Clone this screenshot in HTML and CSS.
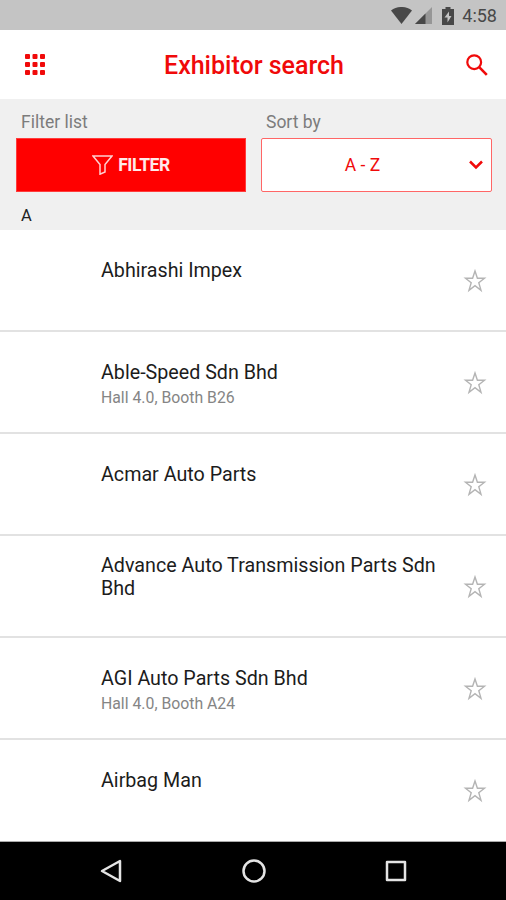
FILE: index.html
```html
<!DOCTYPE html>
<html lang="en">
<head>
    <meta charset="UTF-8">
    <meta name="viewport" content="width=device-width, initial-scale=1.0">
    <title>Exhibitor search</title>
    <link rel="stylesheet" href="styles.css">
</head>
<body>
    <svg class="sprite">
        <symbol id="star" viewBox="0 0 24 24">
            <path d="M12 2l2.400 7.300h7.100l-5.700 4.500 2.200 7.500-6-4.600-6 4.600 2.200-7.500-5.700-4.500h7.100z" fill="none" stroke="#b4b4b4" stroke-width="1.4"/>
        </symbol>
    </svg>

    <div class="screen">
        <!-- status bar -->
        <div class="status-bar">
            <svg class="wifi" width="21" height="17" viewBox="0 0 21 17"><path d="M0 3.500C6-1.200 15-1.200 21 3.500L10.500 17z" fill="#484848"/></svg>
            <svg class="signal" width="17" height="17" viewBox="0 0 17 17"><path d="M17 0v17H0z" fill="#969696"/><path d="M10.500 6.500V17H0z" fill="#484848"/></svg>
            <svg class="battery" width="12" height="18" viewBox="0 0 12 18"><path d="M3.500 0h5v2H12v16H0V2h3.500z" fill="#484848"/><path d="M7 4.500L2.500 10.500H5.500V15.500L9.500 9H7z" fill="#c4c4c4"/></svg>
            <span class="clock">4:58</span>
        </div>

        <!-- header -->
        <div class="header">
            <svg class="menu-icon" width="20" height="21" viewBox="0 0 20 21" fill="#f00a0a">
                <rect x="0" y="0" width="5" height="5" rx="1"/><rect x="7.500" y="0" width="5" height="5" rx="1"/><rect x="15" y="0" width="5" height="5" rx="1"/>
                <rect x="0" y="8" width="5" height="5" rx="1"/><rect x="7.500" y="8" width="5" height="5" rx="1"/><rect x="15" y="8" width="5" height="5" rx="1"/>
                <rect x="0" y="16" width="5" height="5" rx="1"/><rect x="7.500" y="16" width="5" height="5" rx="1"/><rect x="15" y="16" width="5" height="5" rx="1"/>
            </svg>
            <h1>Exhibitor search</h1>
            <svg class="search-icon" width="22" height="22" viewBox="0 0 22 22" fill="none" stroke="#f00a0a">
                <circle cx="8.200" cy="8.200" r="6.900" stroke-width="2.200"/>
                <path d="M13.200 13.200l7.600 7.600" stroke-width="2.600"/>
            </svg>
        </div>

        <!-- filter and sort -->
        <div class="toolbar">
            <div class="field">
                <label>Filter list</label>
                <button class="filter">
                    <svg width="21" height="20" viewBox="0 0 21 20" fill="none" stroke="#ffd0d0" stroke-width="1.500"><path d="M1 1h19l-7 8.500v7.500l-5 2.200V9.500z"/></svg>
                    FILTER
                </button>
            </div>
            <div class="field">
                <label>Sort by</label>
                <button class="sort">
                    <span>A - Z</span>
                    <svg width="14" height="10" viewBox="0 0 14 10" fill="none" stroke="#f00a0a" stroke-width="2.500"><path d="M1 1.500l6 6 6-6"/></svg>
                </button>
            </div>
            <div class="letter">A</div>
        </div>

        <!-- exhibitors -->
        <div class="list">
            <div class="item">
                <div class="info">
                    <div class="name"><span>Abhirashi Impex</span></div>
                </div>
                <svg class="star"><use href="#star"/></svg>
            </div>
            <div class="item">
                <div class="info">
                    <div class="name"><span>Able-Speed Sdn Bhd</span></div>
                    <div class="place">Hall 4.0, Booth B26</div>
                </div>
                <svg class="star"><use href="#star"/></svg>
            </div>
            <div class="item">
                <div class="info">
                    <div class="name"><span>Acmar Auto Parts</span></div>
                </div>
                <svg class="star"><use href="#star"/></svg>
            </div>
            <div class="item">
                <div class="info">
                    <div class="name"><span>Advance Auto Transmission Parts Sdn Bhd</span></div>
                </div>
                <svg class="star"><use href="#star"/></svg>
            </div>
            <div class="item">
                <div class="info">
                    <div class="name"><span>AGI Auto Parts Sdn Bhd</span></div>
                    <div class="place">Hall 4.0, Booth A24</div>
                </div>
                <svg class="star"><use href="#star"/></svg>
            </div>
            <div class="item">
                <div class="info">
                    <div class="name"><span>Airbag Man</span></div>
                </div>
                <svg class="star"><use href="#star"/></svg>
            </div>
        </div>

        <!-- android navigation -->
        <div class="nav-bar">
            <svg width="24" height="26" viewBox="0 0 24 26"><path d="M21 3v20L3 13z"/></svg>
            <svg width="26" height="26" viewBox="0 0 26 26"><circle cx="13" cy="13" r="10.500"/></svg>
            <svg width="24" height="26" viewBox="0 0 24 26"><rect x="3" y="4" width="18" height="18"/></svg>
        </div>
    </div>
</body>
</html>
```

FILE: styles.css
```css
* {
    box-sizing: border-box;
}

body {
    margin: 0;
    font-family: Roboto, "Liberation Sans", sans-serif;
    background: #fff;
}

svg {
    flex: none;
    display: block;
}

.sprite {
    display: none;
}

.screen {
    width: 506px;
    height: 900px;
    display: flex;
    flex-direction: column;
    overflow: hidden;
}

.status-bar {
    height: 30px;
    padding: 1px 9px 0 0;
    display: flex;
    justify-content: flex-end;
    align-items: center;
    background: #c4c4c4;
    color: #484848;
}

.signal {
    margin-left: 3px;
}

.battery {
    margin: 0 8px 0 10px;
}

.clock {
    font-size: 18px;
    line-height: 28px;
}

.header {
    height: 69px;
    padding: 0 18px 0 25px;
    display: flex;
    justify-content: space-between;
    align-items: center;
    color: #f00a0a;
}

.header h1 {
    margin: 2px 3px 0 0;
    font-size: 25px;
    font-weight: 500;
}

.toolbar {
    height: 131px;
    padding: 13px 14px 0 16px;
    display: grid;
    grid-template-columns: 230px 231px;
    column-gap: 15px;
    align-content: start;
    background: #f0f0f0;
}

.field label {
    display: block;
    height: 26px;
    padding-left: 5px;
    font-size: 17.5px;
    line-height: 20px;
    color: #7c7c7c;
}

.field button {
    width: 100%;
    height: 54px;
    padding: 0;
    display: flex;
    align-items: center;
    font-family: inherit;
    font-size: 17.5px;
}

.filter {
    justify-content: center;
    gap: 5px;
    border: 1px solid #ff3c3c;
    background: #f00;
    color: #ffeaea;
    font-weight: 700;
    letter-spacing: -0.4px;
}

.sort {
    border: 1.5px solid #f66;
    border-radius: 2px;
    background: #fff;
    color: #f00a0a;
}

.sort span {
    flex: 1;
    padding-right: 6px;
}

.sort svg {
    margin-right: 8px;
}

.letter {
    padding: 14px 0 0 5px;
    font-size: 16.5px;
    line-height: 20px;
    color: #222;
}

.item {
    height: 102px;
    padding: 18px 19px 0 101px;
    display: flex;
    justify-content: space-between;
    border-bottom: 2px solid #e2e2e2;
}

.item:last-child {
    border-bottom-color: #aaa;
    border-bottom-width: 1px;
}

.info {
    width: 345px;
}

.name {
    min-height: 44px;
    display: flex;
    align-items: center;
    font-size: 19.7px;
    line-height: 23px;
    color: #1c1c1c;
}

.place {
    margin-top: -5px;
    font-size: 15.8px;
    line-height: 18px;
    color: #858585;
}

.star {
    width: 24px;
    height: 24px;
    margin-top: 21px;
}

.nav-bar {
    height: 58px;
    padding: 0 98px 0 99px;
    display: flex;
    justify-content: space-between;
    align-items: center;
    background: #000;
}

.nav-bar svg {
    fill: none;
    stroke: #e4e4e4;
    stroke-width: 2.5;
    stroke-linejoin: round;
}
```
